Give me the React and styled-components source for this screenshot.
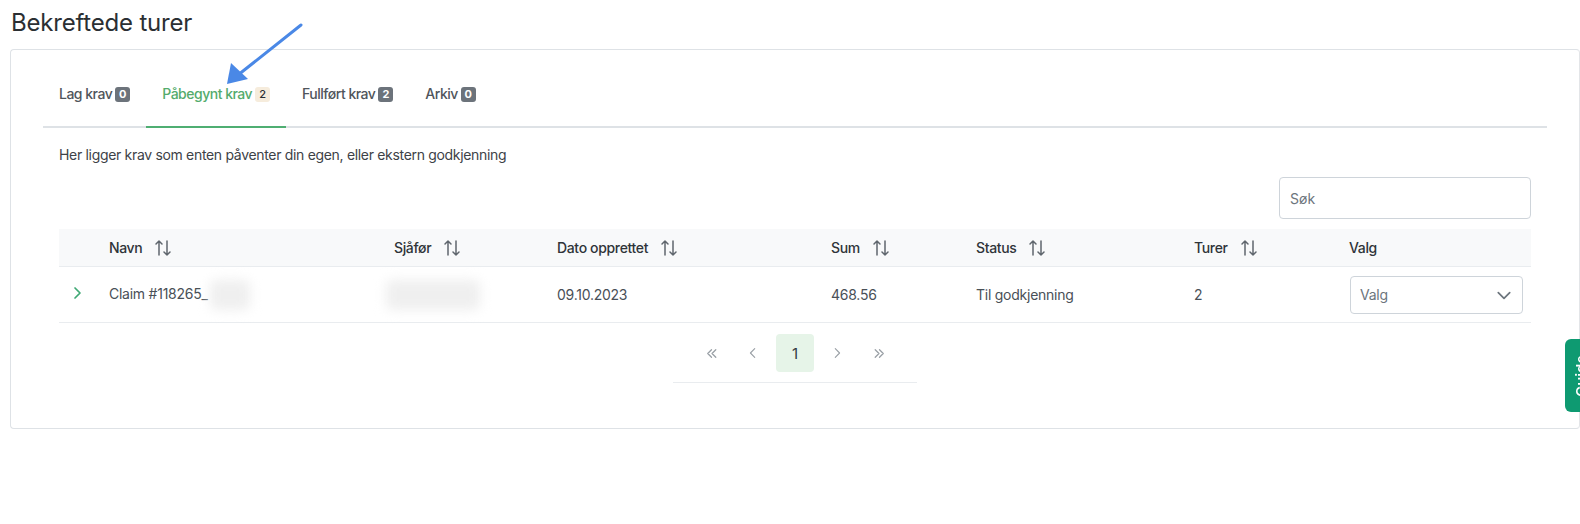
import React from 'react';
import styled, { createGlobalStyle } from 'styled-components';

const Global = createGlobalStyle`
  body {
    margin: 0;
    background: #fff;
    font-family: Inter, "Noto Sans", sans-serif;
    color: #495057;
    overflow: hidden;
  }
`;

const Page = styled.div`
  position: relative;
  padding: 8px 0 0 10px;
  height: 516px;
`;

const Title = styled.h1`
  margin: 0 0 12px 1px;
  font-size: 24px;
  font-weight: 400;
  line-height: 29px;
  color: #2b2f33;
  letter-spacing: -0.2px;
`;

const Card = styled.div`
  border: 1px solid #dee2e6;
  border-right-color: #e3e5e8;
  border-radius: 4px;
  padding: 28px 32px 45px;
  background: #fff;
`;

const TabList = styled.div`
  display: flex;
  border-bottom: 2px solid #dee2e6;
`;

const Tab = styled.div`
  display: flex;
  align-items: center;
  gap: 3px;
  padding: 6px 16px 22px;
  margin-bottom: -2px;
  border-bottom: 2px solid ${p => (p.$active ? '#4fae72' : 'transparent')};
  font-size: 14px;
  font-weight: 500;
  line-height: 20px;
  letter-spacing: -0.5px;
  color: ${p => (p.$active ? '#54ab6c' : '#4f555b')};
`;

const Badge = styled.span`
  display: inline-flex;
  align-items: center;
  justify-content: center;
  min-width: 15px;
  height: 15px;
  padding: 0 2px;
  box-sizing: border-box;
  border-radius: 3px;
  font-size: 11px;
  font-weight: ${p => (p.$light ? 500 : 700)};
  letter-spacing: 0;
  background: ${p => (p.$light ? '#f6ecdc' : '#6c737b')};
  color: ${p => (p.$light ? '#2b2f33' : '#fff')};
`;

const Panel = styled.div`
  padding: 17px 16px 0;
`;

const Intro = styled.p`
  margin: 0;
  font-size: 14px;
  line-height: 20px;
  color: #3d4247;
  letter-spacing: -0.32px;
`;

const SearchRow = styled.div`
  display: flex;
  justify-content: flex-end;
  margin: 12px 0 10px;
`;

const Search = styled.input`
  width: 252px;
  height: 42px;
  box-sizing: border-box;
  border: 1px solid #ced4da;
  border-radius: 4px;
  padding: 0 10px;
  font-family: inherit;
  font-size: 14px;
  color: #495057;
  outline: none;
  &::placeholder {
    color: #6c757d;
  }
`;

const Table = styled.table`
  width: 100%;
  border-collapse: collapse;
  table-layout: fixed;
  font-size: 14px;
`;

const Th = styled.th`
  height: 37px;
  padding: 0 0 0 16px;
  background: #f8f9fa;
  border-bottom: 1px solid #e9ecef;
  text-align: left;
  font-weight: 500;
  color: #2f3439;
  letter-spacing: -0.35px;
  white-space: nowrap;
`;

const Td = styled.td`
  height: 55px;
  padding: 0 0 0 ${p => (p.$pad !== undefined ? p.$pad : 16)}px;
  border-bottom: 1px solid #e9ecef;
  color: #495057;
  letter-spacing: -0.25px;
  white-space: nowrap;
`;

const HeadInner = styled.span`
  display: inline-flex;
  align-items: center;
  gap: 12px;
`;

const Blur = styled.span`
  display: inline-block;
  vertical-align: middle;
  width: ${p => p.$w}px;
  height: ${p => p.$h}px;
  margin-left: ${p => p.$ml || 0}px;
  background: #efefef;
  filter: blur(6px);
  border-radius: 6px;
`;

const Select = styled.div`
  display: flex;
  align-items: center;
  justify-content: space-between;
  width: 173px;
  height: 38px;
  box-sizing: border-box;
  border: 1px solid #ced4da;
  border-radius: 4px;
  padding: 0 10px 0 9px;
  color: #6c757d;
`;

const Paginator = styled.div`
  display: flex;
  justify-content: center;
`;

const PagerInner = styled.div`
  display: flex;
  padding: 11px 17px 10px;
  border-bottom: 1px solid #e9ecef;
`;

const PageBtn = styled.div`
  width: 38px;
  height: 38px;
  margin: 0 2px;
  display: flex;
  align-items: center;
  justify-content: center;
  border-radius: 4px;
  font-size: 15px;
  color: ${p => (p.$active ? '#343a40' : '#9aa0a6')};
  background: ${p => (p.$active ? '#e6f4e8' : 'transparent')};
`;

const SideTab = styled.div`
  position: absolute;
  left: 1565px;
  top: 339px;
  width: 44px;
  height: 73px;
  box-sizing: border-box;
  padding-right: 7px;
  background: #0e9a71;
  border-radius: 0 6px 6px 0;
  color: #fff;
  font-size: 15px;
  font-weight: 500;
  writing-mode: vertical-rl;
  transform: rotate(180deg);
  display: flex;
  align-items: flex-start;
  justify-content: center;
`;

const Annotation = styled.svg`
  position: absolute;
  left: 0;
  top: 0;
  pointer-events: none;
`;

const SortIcon = () => (
  <svg width="18" height="18" viewBox="0 0 18 18" fill="none" stroke="#5f666d" strokeWidth="1.5" strokeLinecap="round" strokeLinejoin="round">
    <path d="M5 16V2M2 5l3-3 3 3" />
    <path d="M13 2v14M10 13l3 3 3-3" />
  </svg>
);

const Chevron = ({ dir = 'right', color = '#6c757d', size = 14, w = 1.6 }) => {
  const d = {
    right: 'M5 2l5 5-5 5',
    left: 'M9 2L4 7l5 5',
    down: 'M2 5l5 5 5-5',
  }[dir];
  return (
    <svg width={size} height={size} viewBox="0 0 14 14" fill="none" stroke={color} strokeWidth={w} strokeLinecap="round" strokeLinejoin="round">
      <path d={d} />
    </svg>
  );
};

const Double = ({ dir }) => (
  <svg width="15" height="15" viewBox="0 0 14 14" fill="none" stroke="#9aa0a6" strokeWidth="1.2" strokeLinecap="round" strokeLinejoin="round">
    {dir === 'left' ? <path d="M7 3.5L3.5 7 7 10.5M11 3.5L7.5 7 11 10.5" /> : <path d="M3 3.5L6.5 7 3 10.5M7 3.5L10.5 7 7 10.5" />}
  </svg>
);

const tabs = [
  { label: 'Lag krav', count: 0 },
  { label: 'Påbegynt krav', count: 2, active: true },
  { label: 'Fullført krav', count: 2 },
  { label: 'Arkiv', count: 0 },
];

const cols = [
  { w: 34 },
  { w: 285, label: 'Navn', sort: true },
  { w: 163, label: 'Sjåfør', sort: true },
  { w: 274, label: 'Dato opprettet', sort: true },
  { w: 145, label: 'Sum', sort: true },
  { w: 218, label: 'Status', sort: true },
  { w: 155, label: 'Turer', sort: true },
  { w: 198, label: 'Valg' },
];

export default function App() {
  return (
    <Page>
      <Global />
      <Title>Bekreftede turer</Title>
      <Card>
        <TabList>
          {tabs.map(t => (
            <Tab key={t.label} $active={t.active}>
              {t.label}
              <Badge $light={t.active}>{t.count}</Badge>
            </Tab>
          ))}
        </TabList>
        <Panel>
          <Intro>Her ligger krav som enten påventer din egen, eller ekstern godkjenning</Intro>
          <SearchRow>
            <Search placeholder="Søk" />
          </SearchRow>
          <Table>
            <colgroup>
              {cols.map((c, i) => (
                <col key={i} style={{ width: c.w }} />
              ))}
            </colgroup>
            <thead>
              <tr>
                {cols.map((c, i) => (
                  <Th key={i}>
                    {c.label && (
                      <HeadInner>
                        {c.label}
                        {c.sort && <SortIcon />}
                      </HeadInner>
                    )}
                  </Th>
                ))}
              </tr>
            </thead>
            <tbody>
              <tr>
                <Td $pad={11}>
                  <Chevron dir="right" color="#3fa874" size={14} w={1.7} />
                </Td>
                <Td>
                  Claim #118265_
                  <Blur $w={40} $h={30} $ml={2} />
                </Td>
                <Td $pad={8}>
                  <Blur $w={94} $h={30} />
                </Td>
                <Td>09.10.2023</Td>
                <Td>468.56</Td>
                <Td>Til godkjenning</Td>
                <Td>2</Td>
                <Td $pad={17}>
                  <Select>
                    Valg
                    <Chevron dir="down" color="#6c757d" size={16} w={1.5} />
                  </Select>
                </Td>
              </tr>
            </tbody>
          </Table>
          <Paginator>
            <PagerInner>
              <PageBtn><Double dir="left" /></PageBtn>
              <PageBtn><Chevron dir="left" color="#9aa0a6" size={12} w={1.3} /></PageBtn>
              <PageBtn $active>1</PageBtn>
              <PageBtn><Chevron dir="right" color="#9aa0a6" size={12} w={1.3} /></PageBtn>
              <PageBtn><Double dir="right" /></PageBtn>
            </PagerInner>
          </Paginator>
        </Panel>
      </Card>
      <SideTab>Guide</SideTab>
      <Annotation width="1580" height="524" viewBox="0 0 1580 524">
        <line x1="301" y1="25" x2="238" y2="75" stroke="#4a88e6" strokeWidth="3" strokeLinecap="round" />
        <polygon points="227,84 231,63 248,79" fill="#4a88e6" />
      </Annotation>
    </Page>
  );
}
